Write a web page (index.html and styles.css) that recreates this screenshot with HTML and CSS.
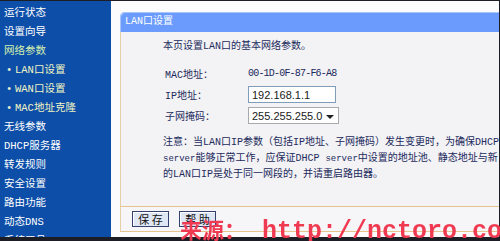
FILE: index.html
```html
<!DOCTYPE html>
<html lang="zh-CN">
<head>
<meta charset="utf-8">
<title>LAN口设置</title>
<link rel="stylesheet" href="styles.css">
</head>
<body>
<div class="frame">
  <nav class="sidebar">
    <div class="nav-item">运行状态</div>
    <div class="nav-item">设置向导</div>
    <div class="nav-item open">网络参数</div>
    <div class="nav-sub"><span class="dot">•</span>LAN口设置</div>
    <div class="nav-sub"><span class="dot">•</span>WAN口设置</div>
    <div class="nav-sub"><span class="dot">•</span>MAC地址克隆</div>
    <div class="nav-item">无线参数</div>
    <div class="nav-item">DHCP服务器</div>
    <div class="nav-item">转发规则</div>
    <div class="nav-item">安全设置</div>
    <div class="nav-item">路由功能</div>
    <div class="nav-item">动态DNS</div>
    <div class="nav-item">系统工具</div>
  </nav>
  <main class="main">
    <section class="panel">
      <header class="panel-head">LAN口设置</header>
      <div class="panel-body">
        <p class="intro">本页设置LAN口的基本网络参数。</p>
        <div class="form">
          <div class="row"><span class="label">MAC地址：</span><span class="mac">00-1D-0F-87-F6-A8</span></div>
          <div class="row"><span class="label">IP地址：</span><span class="input">192.168.1.1</span></div>
          <div class="row"><span class="label">子网掩码：</span><span class="select"><span class="sel-val">255.255.255.0</span><span class="arrow"></span></span></div>
        </div>
        <div class="note">
          <div>注意：当LAN口IP参数（包括IP地址、子网掩码）发生变更时，为确保DHCP</div>
          <div><span class="small">server</span>能够正常工作，应保证DHCP <span class="small">server</span>中设置的地址池、静态地址与新</div>
          <div>的LAN口IP是处于同一网段的，并请重启路由器。</div>
        </div>
      </div>
      <div class="panel-foot">
        <span class="btn">保 存</span>
        <span class="btn">帮 助</span>
      </div>
    </section>
  </main>
</div>
<div class="watermark"><span class="wm-cjk">来源：</span><span class="wm-lat">http://nctoro.com</span></div>
</body>
</html>
```
FILE: styles.css
```css
html, body {
  margin: 0;
  padding: 0;
}
body {
  width: 500px;
  height: 241px;
  overflow: hidden;
  background: #1d1d26;
  position: relative;
  font-family: "Liberation Mono", "Noto Sans CJK SC", monospace;
  font-size: 10px;
}
.frame {
  margin-top: 1px;
  margin-right: 1px;
  height: 236px;
  display: flex;
  background: #fcfcfd;
  overflow: hidden;
}
.sidebar {
  width: 111px;
  flex: none;
  background: #0c4ea8;
  padding-top: 3px;
  box-sizing: border-box;
}
.nav-item, .nav-sub {
  height: 19px;
  line-height: 19px;
  color: #ffffff;
  padding-left: 4px;
  white-space: nowrap;
  font-size: 10.5px;
}
.nav-item.open {
  color: #d4efb0;
}
.nav-sub {
  color: #f2f5c4;
  padding-left: 6px;
  display: flex;
}
.dot {
  width: 9px;
  color: #e8f0d0;
}
.main {
  flex: 1;
  padding: 11px 0 0 9px;
  overflow: hidden;
}
.panel {
  width: 420px;
}
.panel-head {
  height: 20px;
  line-height: 20px;
  background: #6b9cfd;
  color: #ffffff;
  border-radius: 5px 0 0 0;
  padding-left: 5px;
  box-shadow: inset 1px 1px 0 #a9c4f6;
}
.panel-body {
  height: 174px;
  box-sizing: border-box;
  background: #f3f2f5;
  border-left: 1px solid #e6cfa2;
  padding: 8px 0 0 42px;
  color: #1b2a5c;
  white-space: nowrap;
}
.intro {
  margin: 0;
  line-height: 14px;
}
.form {
  margin-top: 9px;
  padding-left: 2px;
}
.row {
  height: 21px;
  display: flex;
  align-items: center;
}
.label {
  width: 83px;
}
.mac {
  letter-spacing: -0.8px;
}
.small {
  font-size: 9px;
}
.input, .select {
  height: 17px;
  box-sizing: border-box;
  background: #ffffff;
  display: flex;
  align-items: center;
  font-family: "Liberation Sans", sans-serif;
  font-size: 11px;
  color: #1a1a1a;
  padding-left: 3px;
}
.input {
  width: 88px;
  border: 1px solid #7f9db9;
}
.select {
  width: 91px;
  border: 1px solid #a7a9ad;
  justify-content: space-between;
  padding-right: 4px;
}
.arrow {
  width: 0;
  height: 0;
  border-left: 4px solid transparent;
  border-right: 4px solid transparent;
  border-top: 4px solid #222222;
  margin-top: 2px;
}
.note {
  margin-top: 9px;
  line-height: 16px;
}
.panel-foot {
  height: 26px;
  box-sizing: border-box;
  border-top: 1px solid #e6c48e;
  border-bottom: 1px solid #e6c48e;
  border-left: 1px solid #e6cfa2;
  background: #f6f5f7;
  display: flex;
  gap: 10px;
  padding: 4px 0 0 11px;
}
.btn {
  width: 37px;
  height: 16px;
  box-sizing: border-box;
  border: 1px solid #34406e;
  background: #dfe6f4;
  box-shadow: inset 1px 1px 0 #ffffff;
  color: #111111;
  font-family: "Noto Sans CJK SC", sans-serif;
  font-size: 11px;
  line-height: 14px;
  text-align: center;
}
.watermark {
  position: absolute;
  left: 180px;
  top: 212px;
  display: flex;
  align-items: baseline;
  white-space: nowrap;
  background: radial-gradient(circle, #ef3a52 55%, rgba(255, 140, 150, 0.55) 60%) 0 0 / 2px 2px;
  -webkit-background-clip: text;
  background-clip: text;
  color: transparent;
}
.wm-cjk {
  font-family: "Noto Sans CJK SC", sans-serif;
  font-size: 22px;
  font-weight: bold;
  width: 82px;
}
.wm-lat {
  font-family: "Liberation Mono", monospace;
  font-size: 25px;
  font-weight: bold;
}
```
